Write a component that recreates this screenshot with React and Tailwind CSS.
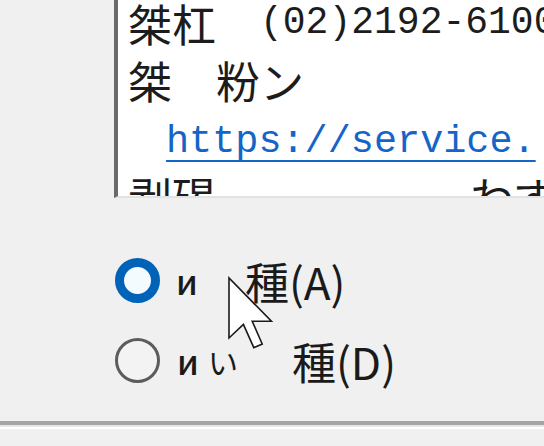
import React from 'react'

const cjk = '"Noto Sans CJK JP", "Noto Sans", sans-serif'
const mono = '"Liberation Mono", "Noto Sans CJK JP", monospace'

function Radio({ checked }) {
  return checked ? (
    <span className="block w-[45px] h-[45px] shrink-0 rounded-full border-[9px] border-[#0063b8] bg-[#f4fbff]" />
  ) : (
    <span className="block w-[45px] h-[45px] shrink-0 rounded-full border-[3px] border-[#5c5c5c] bg-[#f3f3f3]" />
  )
}

function Cursor() {
  return (
    <svg
      className="absolute left-[224px] top-[274px] w-[54px] h-[80px]"
      viewBox="0 0 13 20"
    >
      <path
        d="M1 1 L1 16 L4.6 12.6 L7.2 18.4 L9.3 17.5 L6.8 11.8 L11.6 11.8 Z"
        fill="#ffffff"
        stroke="#1a1a1a"
        strokeWidth="0.4"
        strokeLinejoin="miter"
      />
    </svg>
  )
}

export default function App() {
  return (
    <div className="relative w-[544px] h-[446px] bg-[#f0f0f0] overflow-hidden">
      {/* text box (top cut off) */}
      <div className="pl-[114px]">
        <div className="h-[198px] overflow-hidden bg-white border-l-[4px] border-l-[#6a6a6a] border-b-2 border-b-[#e2e2e2]">
          <div className="-mt-[6px] pl-[10px] text-[#1c1c1c] whitespace-nowrap">
            <div className="h-[57px] flex items-center">
              <span className="text-[44px] leading-none" style={{ fontFamily: cjk }}>桀杠　</span>
              <span className="text-[38px] leading-none" style={{ fontFamily: mono }}>(02)2192-6100</span>
            </div>
            <div className="h-[57px] flex items-center">
              <span className="text-[44px] leading-none" style={{ fontFamily: cjk }}>桀　粉ン</span>
            </div>
            <div className="h-[57px] flex items-center pl-[38px] pt-[12px]">
              <span
                className="text-[38.5px] leading-none text-[#1565c8] underline underline-offset-[8px] decoration-2"
                style={{ fontFamily: mono }}
              >
                https://service.
              </span>
            </div>
            <div className="h-[57px] flex items-center pt-[4px]">
              <span className="text-[44px] leading-none" style={{ fontFamily: cjk }}>剥碣</span>
              <span className="text-[44px] leading-none ml-[254px]" style={{ fontFamily: cjk }}>わず</span>
            </div>
          </div>
        </div>
      </div>

      {/* radio options */}
      <div className="mt-[60px] pl-[115px] flex flex-col gap-[35px] text-[#1a1a1a]" style={{ fontFamily: cjk }}>
        <div className="h-[45px] flex items-center">
          <Radio checked />
          <span className="text-[44px] leading-none ml-[16px] flex items-center">
            <span className="inline-block w-[69px] text-[34px] font-medium">и</span>
            <span>種(A)</span>
          </span>
        </div>
        <div className="h-[45px] flex items-center">
          <Radio />
          <span className="text-[44px] leading-none ml-[17px] flex items-center">
            <span className="inline-block w-[31px] text-[34px] font-medium">и</span>
            <span className="inline-block w-[84px] text-[30px]">い</span>
            <span>種(D)</span>
          </span>
        </div>
      </div>

      {/* separator */}
      <div className="mt-[38px]">
        <div className="h-[4px] bg-[#a4a4a4]" />
        <div className="h-[2px] bg-[#e6e6e6]" />
        <div className="h-[2px] bg-white" />
      </div>

      <Cursor />
    </div>
  )
}
